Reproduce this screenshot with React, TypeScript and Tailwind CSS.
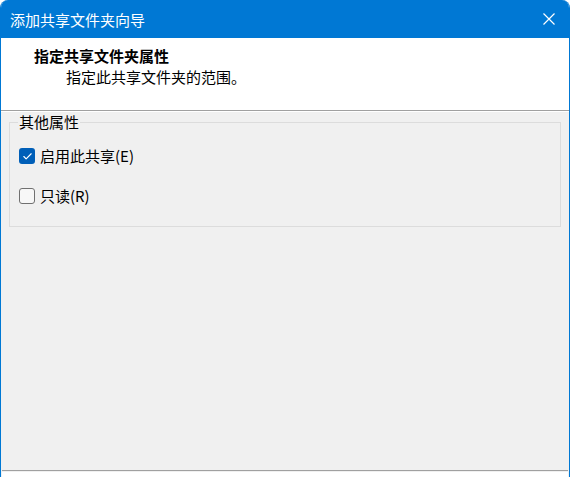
import { Check } from 'lucide-react'

export default function App() {
  return (
    <div
      className="w-[570px] h-[477px] flex flex-col bg-[#f0f0f0] border-x border-[#0078d4] overflow-hidden rounded-t-lg text-[15px] text-black"
      style={{ fontFamily: '"Noto Sans CJK SC", "Noto Sans", sans-serif' }}
    >
      {/* Title bar */}
      <div className="h-[38px] shrink-0 bg-[#0078d4] flex items-center justify-between pl-[9px] pr-[14px]">
        <span className="text-white text-[15px] leading-none">添加共享文件夹向导</span>
        <svg width="12" height="12" viewBox="0 0 12 12" className="text-white">
          <path d="M0.5 0.5L11.5 11.5M11.5 0.5L0.5 11.5" stroke="currentColor" strokeWidth="1.2" />
        </svg>
      </div>

      {/* Header */}
      <div className="h-[72px] shrink-0 bg-white flex flex-col pt-[7px]">
        <div className="pl-[33px] font-bold leading-[22px]">指定共享文件夹属性</div>
        <div className="pl-[65px] leading-[22px] mt-[-1px]">指定此共享文件夹的范围。</div>
      </div>
      <div className="h-px shrink-0 bg-[#a0a0a0]" />
      <div className="h-px shrink-0 bg-white" />

      {/* Body */}
      <div className="flex-1 flex flex-col px-[8px]">
        <fieldset className="h-[115px] border border-[#dcdcdc] pl-[9px] pr-2 pt-[12px] m-0 min-w-0">
          <legend className="px-[1px] ml-[-1px] leading-[20px]">其他属性</legend>
          <label className="flex items-center gap-[5px] h-[24px]">
            <span className="w-4 h-4 rounded-[3px] bg-[#005fb8] flex items-center justify-center">
              <Check className="w-[11px] h-[11px] text-white" strokeWidth={2.5} />
            </span>
            <span>启用此共享(E)</span>
          </label>
          <label className="flex items-center gap-[5px] h-[24px] mt-[16px]">
            <span className="w-4 h-4 rounded-[3px] border border-[#707070] bg-[#f7f7f7]" />
            <span>只读(R)</span>
          </label>
        </fieldset>
        <div className="flex-1" />
      </div>

      <div className="h-px shrink-0 bg-[#a0a0a0] mx-[1px]" />
      <div className="h-[6px] shrink-0 bg-white mx-[1px] border-t border-[#f0f0f0]" />
    </div>
  )
}
